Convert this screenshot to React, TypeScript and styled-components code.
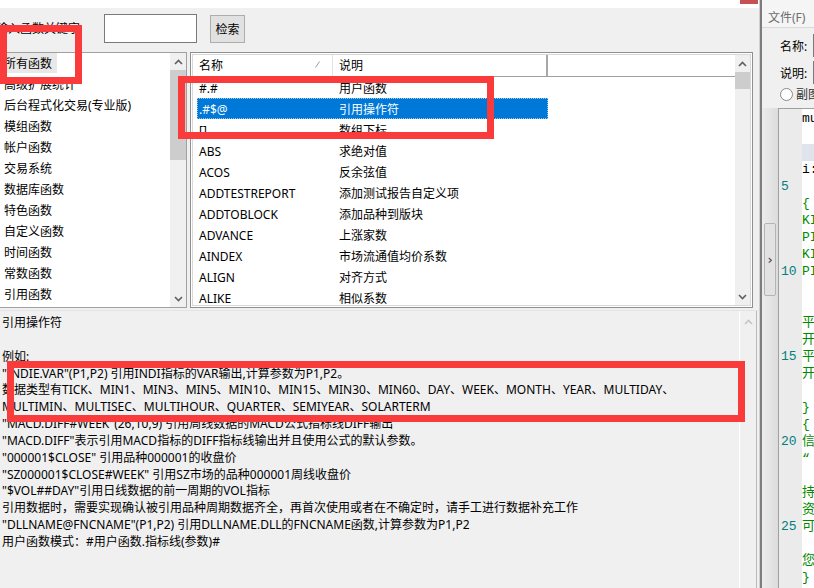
import React from "react";
import styled, { createGlobalStyle } from "styled-components";

const GlobalStyle = createGlobalStyle`
  html, body {
    margin: 0;
    padding: 0;
  }
  body {
    background: #f0f0f0;
    overflow: hidden;
    font-family: "Noto Sans", "Noto Sans CJK SC", "Liberation Sans", sans-serif;
    font-size: 12px;
    color: #000;
  }
`;

const categories = [
  "所有函数",
  "高级扩展统计",
  "后台程式化交易(专业版)",
  "模组函数",
  "帐户函数",
  "交易系统",
  "数据库函数",
  "特色函数",
  "自定义函数",
  "时间函数",
  "常数函数",
  "引用函数",
];

const functions: [string, string][] = [
  ["#.#", "用户函数"],
  [".#$@", "引用操作符"],
  ["[]", "数组下标"],
  ["ABS", "求绝对值"],
  ["ACOS", "反余弦值"],
  ["ADDTESTREPORT", "添加测试报告自定义项"],
  ["ADDTOBLOCK", "添加品种到版块"],
  ["ADVANCE", "上涨家数"],
  ["AINDEX", "市场流通值均价系数"],
  ["ALIGN", "对齐方式"],
  ["ALIKE", "相似系数"],
];

const descLines = [
  "引用操作符",
  "",
  "例如:",
  "\"INDIE.VAR\"(P1,P2) 引用INDI指标的VAR输出,计算参数为P1,P2。",
  "数据类型有TICK、MIN1、MIN3、MIN5、MIN10、MIN15、MIN30、MIN60、DAY、WEEK、MONTH、YEAR、MULTIDAY、",
  "MULTIMIN、MULTISEC、MULTIHOUR、QUARTER、SEMIYEAR、SOLARTERM",
  "\"MACD.DIFF#WEEK\"(26,10,9) 引用周线数据的MACD公式指标线DIFF输出",
  "\"MACD.DIFF\"表示引用MACD指标的DIFF指标线输出并且使用公式的默认参数。",
  "\"000001$CLOSE\" 引用品种000001的收盘价",
  "\"SZ000001$CLOSE#WEEK\" 引用SZ市场的品种000001周线收盘价",
  "\"$VOL##DAY\"引用日线数据的前一周期的VOL指标",
  "引用数据时，需要实现确认被引用品种周期数据齐全，再首次使用或者在不确定时，请手工进行数据补充工作",
  "\"DLLNAME@FNCNAME\"(P1,P2) 引用DLLNAME.DLL的FNCNAME函数,计算参数为P1,P2",
  "用户函数模式：#用户函数.指标线(参数)#",
];

// editor lines: [text, green?]
const codeLines: [string, boolean][] = [
  ["mul", false],
  ["", false],
  ["", false],
  ["i:", false],
  ["", false],
  ["{", true],
  ["KILL", true],
  ["PING", true],
  ["KILL", true],
  ["PING", true],
  ["", false],
  ["", false],
  ["平", true],
  ["开", true],
  ["平", true],
  ["开", true],
  ["", false],
  ["}", true],
  ["{", true],
  ["信", true],
  ["“", true],
  ["", false],
  ["持", true],
  ["资", true],
  ["可", true],
  ["", false],
  ["您", true],
  ["}", true],
];

const Chevron = ({ dir, color = "#606060" }: { dir: "up" | "down"; color?: string }) => (
  <svg width="9" height="6" viewBox="0 0 9 6">
    <polyline
      points={dir === "up" ? "1,5 4.5,1.5 8,5" : "1,1 4.5,4.5 8,1"}
      fill="none"
      stroke={color}
      strokeWidth="1.6"
    />
  </svg>
);

const ScrollBar = ({ size, thumb }: { size: number; thumb: number }) => (
  <Scroll $w={size}>
    <ArrowBtn>
      <Chevron dir="up" />
    </ArrowBtn>
    <Track>
      <Thumb $h={thumb} />
    </Track>
    <ArrowBtn>
      <Chevron dir="down" />
    </ArrowBtn>
  </Scroll>
);

export default function App() {
  return (
    <Root>
      <GlobalStyle />
      <Dialog>
        <TitleStrip>
          <CloseTip />
        </TitleStrip>
        <SearchRow>
          <SearchLabel>输入函数关键字</SearchLabel>
          <SearchInput />
          <SearchButton>检索</SearchButton>
        </SearchRow>
        <ListsRow>
          <CategoryList>
            <CategoryItems>
              {categories.map((c, i) => (
                <CategoryItem key={c}>
                  <CategoryText $selected={i === 0}>{c}</CategoryText>
                </CategoryItem>
              ))}
            </CategoryItems>
            <ScrollBar size={16} thumb={90} />
          </CategoryList>
          <FuncList>
            <FuncInner>
              <FuncMain>
                <HeaderRow>
                  <HeaderCell $w={140} $divider="1px solid #e3e3e3">
                    名称
                    <SortMark width="5" height="7" viewBox="0 0 5 7">
                      <line x1="0.5" y1="6.5" x2="4.5" y2="0.5" stroke="#9a9a9a" strokeWidth="1" />
                    </SortMark>
                  </HeaderCell>
                  <HeaderCell $w={215} $divider="2px solid #a8a8a8">
                    说明
                  </HeaderCell>
                  <HeaderCell />
                </HeaderRow>
                {functions.map(([name, desc], i) => (
                  <FuncRow key={name}>
                    <FuncRowBox $selected={i === 1}>
                      <NameCell>{name}</NameCell>
                      <DescCell>{desc}</DescCell>
                    </FuncRowBox>
                  </FuncRow>
                ))}
              </FuncMain>
              <ScrollBar size={15} thumb={17} />
            </FuncInner>
          </FuncList>
        </ListsRow>
        <DescArea>
          <DescText>
            {descLines.map((l, i) => (
              <DescLine key={i}>{l || "\u00a0"}</DescLine>
            ))}
          </DescText>
          <DescScroll>
            <ArrowBtn>
              <Chevron dir="up" color="#c4c4c4" />
            </ArrowBtn>
          </DescScroll>
        </DescArea>
      </Dialog>
      <Splitter />
      <EditorWindow>
        <MenuBar>
          <MenuItem>文件(F)</MenuItem>
        </MenuBar>
        <Fields>
          <FieldRow>
            <FieldLabel>名称:</FieldLabel>
            <FieldBox />
          </FieldRow>
          <FieldRow>
            <FieldLabel>说明:</FieldLabel>
            <FieldBox />
          </FieldRow>
          <RadioRow>
            <RadioCircle />
            <span>副图</span>
          </RadioRow>
        </Fields>
        <EditorRow>
          <SideStrip>
            <ExpandButton>›</ExpandButton>
          </SideStrip>
          <Editor>
            <Gutter>
              {codeLines.map((_, i) => (
                <LineNo key={i}>{(i + 1) % 5 === 0 ? i + 1 : "\u00a0"}</LineNo>
              ))}
            </Gutter>
            <Code>
              {codeLines.map(([t, green], i) => (
                <CodeLine key={i} $green={green} $current={i === 2}>
                  {t || "\u00a0"}
                </CodeLine>
              ))}
            </Code>
          </Editor>
        </EditorRow>
      </EditorWindow>

      <Mark style={{ left: 0, top: 25, width: 82, height: 59 }} />
      <Mark style={{ left: 178, top: 76, width: 316, height: 63 }} />
      <Mark style={{ left: 7, top: 361, width: 738, height: 61 }} />
    </Root>
  );
}

const Root = styled.div`
  position: relative;
  display: flex;
  width: 814px;
  height: 588px;
  overflow: hidden;
`;

const Dialog = styled.div`
  width: 759px;
  flex: none;
  display: flex;
  flex-direction: column;
  background: #f0f0f0;
  border-right: 1px solid #d0d0d0;
`;

const TitleStrip = styled.div`
  height: 8px;
  background: #fff;
  display: flex;
  justify-content: flex-end;
  padding-right: 1px;
`;

const CloseTip = styled.div`
  width: 18px;
  height: 4px;
  background: #c75050;
`;

const SearchRow = styled.div`
  height: 44px;
  box-sizing: border-box;
  padding-top: 6px;
  display: flex;
  align-items: flex-start;
`;

const SearchLabel = styled.div`
  margin-left: -4px;
  width: 108px;
  line-height: 29px;
  white-space: nowrap;
`;

const SearchInput = styled.div`
  width: 93px;
  height: 29px;
  box-sizing: border-box;
  background: #fff;
  border: 1px solid #7a7a7a;
`;

const SearchButton = styled.div`
  margin-left: 13px;
  margin-top: 1px;
  width: 35px;
  height: 28px;
  box-sizing: border-box;
  background: #e1e1e1;
  border: 1px solid #adadad;
  display: flex;
  align-items: center;
  justify-content: center;
`;

const ListsRow = styled.div`
  height: 256px;
  display: flex;
  gap: 3px;
  margin-left: -1px;
`;

const CategoryList = styled.div`
  width: 188px;
  box-sizing: border-box;
  border: 1px solid #a0a0a0;
  background: #fff;
  display: flex;
`;

const CategoryItems = styled.div`
  flex: 1;
  overflow: hidden;
`;

const CategoryItem = styled.div`
  height: 21px;
  padding-left: 3px;
  white-space: nowrap;
`;

const CategoryText = styled.span<{ $selected?: boolean }>`
  display: inline-block;
  height: 20px;
  box-sizing: border-box;
  padding: 1px 5px 0 1px;
  line-height: 19px;
  background: ${(p) => (p.$selected ? "#e8e8e8" : "transparent")};
`;

const Scroll = styled.div<{ $w: number }>`
  width: ${(p) => p.$w}px;
  flex: none;
  display: flex;
  flex-direction: column;
  background: #f0f0f0;
`;

const ArrowBtn = styled.div`
  height: 17px;
  flex: none;
  display: flex;
  align-items: center;
  justify-content: center;
`;

const Track = styled.div`
  flex: 1;
`;

const Thumb = styled.div<{ $h: number }>`
  height: ${(p) => p.$h}px;
  background: #cdcdcd;
`;

const FuncList = styled.div`
  width: 563px;
  box-sizing: border-box;
  border: 1px solid #8f8f8f;
  padding: 1px;
  background: #fff;
`;

const FuncInner = styled.div`
  height: 100%;
  box-sizing: border-box;
  border: 1px solid #d8d8d8;
  display: flex;
`;

const FuncMain = styled.div`
  flex: 1;
  overflow: hidden;
`;

const HeaderRow = styled.div`
  height: 22px;
  box-sizing: border-box;
  display: flex;
  border-bottom: 1px solid #a0a0a0;
`;

const HeaderCell = styled.div<{ $w?: number; $divider?: string }>`
  position: relative;
  box-sizing: border-box;
  ${(p) => (p.$w ? `width: ${p.$w}px; flex: none;` : "flex: 1;")}
  border-right: ${(p) => p.$divider || "none"};
  padding-left: 6px;
  line-height: 21px;
`;

const SortMark = styled.svg`
  position: absolute;
  left: 122px;
  top: 6px;
`;

const FuncRow = styled.div`
  height: 21px;
  padding-left: 4px;
  white-space: nowrap;
`;

const FuncRowBox = styled.div<{ $selected?: boolean }>`
  width: 351px;
  height: 21px;
  box-sizing: border-box;
  display: flex;
  padding-top: 2px;
  line-height: 19px;
  background: ${(p) => (p.$selected ? "#0078d7" : "transparent")};
  color: ${(p) => (p.$selected ? "#fff" : "#000")};
  outline: ${(p) => (p.$selected ? "1px dotted #9cc3ea" : "none")};
  outline-offset: -1px;
`;

const NameCell = styled.div`
  width: 136px;
  flex: none;
  padding-left: 2px;
  box-sizing: border-box;
`;

const DescCell = styled.div`
  padding-left: 6px;
`;

const DescArea = styled.div`
  flex: 1;
  margin-top: 2px;
  display: flex;
  padding-right: 2px;
  border-top: 1px solid #e4e4e4;
`;

const DescText = styled.div`
  flex: 1;
  overflow: hidden;
  padding: 4px 0 0 2px;
`;

const DescLine = styled.div`
  height: 16.85px;
  line-height: 16.85px;
  white-space: nowrap;
`;

const DescScroll = styled.div`
  width: 16px;
  flex: none;
  background: #f0f0f0;
  border-left: 1px solid #fff;
  border-right: 1px solid #b9b9b9;
  padding-top: 2px;
`;

const Splitter = styled.div`
  width: 2px;
  flex: none;
  background: #7d7d7d;
`;

const EditorWindow = styled.div`
  flex: 1;
  display: flex;
  flex-direction: column;
  background: #f0f0f0;
  overflow: hidden;
`;

const MenuBar = styled.div`
  height: 28px;
  box-sizing: border-box;
  padding: 9px 0 0 6px;
  border-bottom: 1px solid #dadada;
  background: #f5f5f5;
`;

const MenuItem = styled.span`
  color: #6d6d6d;
  line-height: 18px;
  white-space: nowrap;
`;

const Fields = styled.div`
  padding: 4px 0 6px 18px;
`;

const FieldRow = styled.div`
  height: 27px;
  display: flex;
  align-items: center;
  white-space: nowrap;
`;

const FieldLabel = styled.span`
  width: 33px;
  flex: none;
`;

const FieldBox = styled.div`
  width: 40px;
  height: 21px;
  flex: none;
  background: #fff;
  border: 1px solid #7a7a7a;
`;

const RadioRow = styled.div`
  height: 16px;
  display: flex;
  align-items: center;
  gap: 3px;
  white-space: nowrap;
  color: #333;
`;

const RadioCircle = styled.div`
  width: 11px;
  height: 11px;
  flex: none;
  border-radius: 50%;
  border: 1px solid #8a8a8a;
  background: #fff;
`;

const EditorRow = styled.div`
  flex: 1;
  display: flex;
`;

const SideStrip = styled.div`
  width: 17px;
  flex: none;
  background: linear-gradient(to right, #ececec, #dcdcdc);
  border-right: 1px solid #a0a0a0;
  padding-top: 115px;
  box-sizing: border-box;
  display: flex;
  justify-content: center;
`;

const ExpandButton = styled.div`
  width: 12px;
  height: 73px;
  box-sizing: border-box;
  border: 1px solid #b4b4b4;
  border-radius: 2px;
  background: #e2e2e2;
  display: flex;
  align-items: center;
  justify-content: center;
  font-family: "DejaVu Sans", sans-serif;
  font-size: 13px;
  color: #333;
`;

const Editor = styled.div`
  flex: 1;
  display: flex;
  border-top: 1px solid #a0a0a0;
  background: #fff;
  overflow: hidden;
`;

const Gutter = styled.div`
  width: 23px;
  flex: none;
  background: #ebebeb;
  padding: 1px 0 0 2px;
  box-sizing: border-box;
  font-family: "Liberation Mono", monospace;
  font-size: 13px;
  color: #008080;
`;

const LineNo = styled.div`
  height: 17px;
  line-height: 17px;
  white-space: nowrap;
`;

const Code = styled.div`
  flex: 1;
  padding-top: 1px;
  font-family: "Liberation Mono", "Noto Sans CJK SC", monospace;
  font-size: 13px;
`;

const CodeLine = styled.div<{ $green?: boolean; $current?: boolean }>`
  height: 17px;
  line-height: 17px;
  white-space: nowrap;
  color: ${(p) => (p.$green ? "#008a00" : "#000")};
  background: ${(p) => (p.$current ? "#dfe4ec" : "transparent")};
`;

const Mark = styled.div`
  position: absolute;
  box-sizing: border-box;
  border: 7px solid #fa3b3b;
  pointer-events: none;
`;
